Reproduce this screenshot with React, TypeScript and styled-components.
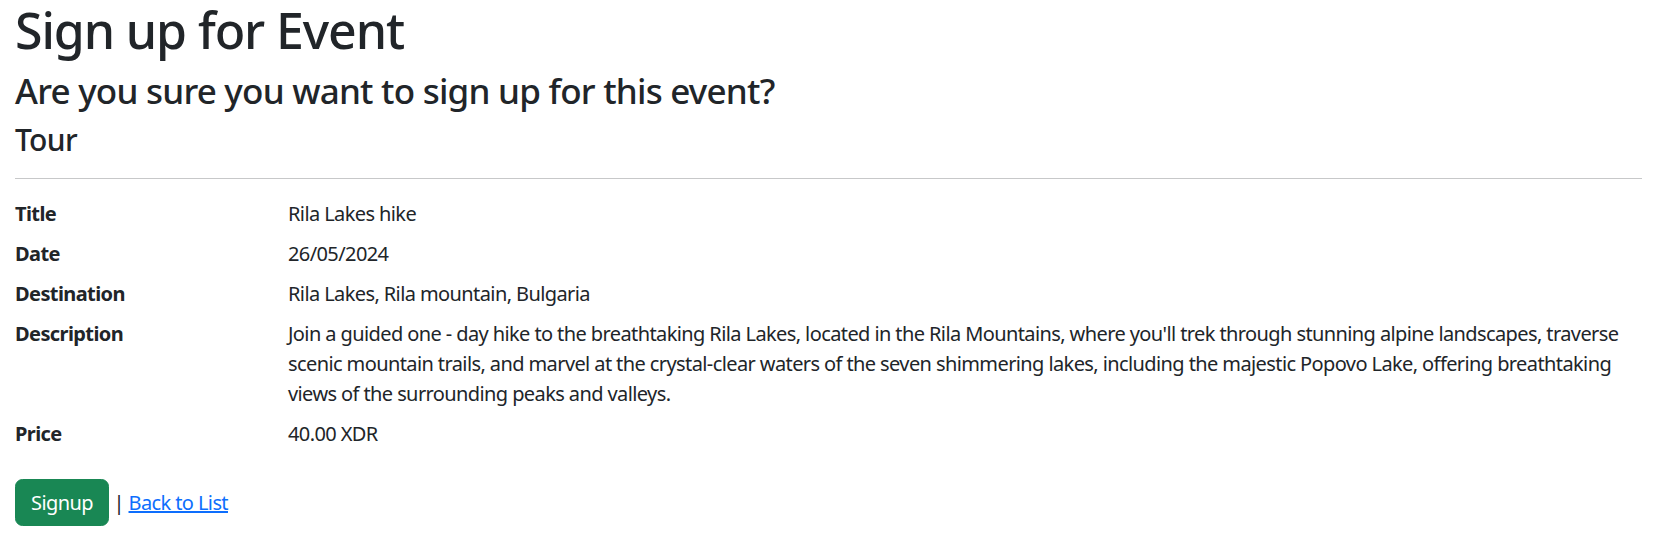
import styled, { createGlobalStyle } from 'styled-components';

const GlobalStyle = createGlobalStyle`
  body {
    margin: 0;
    background: #fff;
    color: #212529;
    font-family: 'Noto Sans', 'Open Sans', sans-serif;
    font-size: 20px;
    line-height: 1.5;
    letter-spacing: -0.6px;
  }
`;

const Page = styled.main`
  padding: 0 15px;
`;

const Heading = styled.h1<{ size: number }>`
  margin: 0 0 10px;
  font-size: ${({ size }) => size}px;
  font-weight: 500;
  line-height: 1.2;
  letter-spacing: -0.022em;
`;

const Divider = styled.hr`
  margin: 20px 0;
  border: 0;
  border-top: 1px solid rgba(33, 37, 41, 0.25);
`;

const Details = styled.dl`
  display: grid;
  grid-template-columns: 243px 1fr;
  column-gap: 30px;
  margin: 0 0 20px;
`;

const Term = styled.dt`
  font-weight: 700;
  margin: 0;
`;

const Value = styled.dd`
  margin: 0 0 10px;
`;

const Actions = styled.form`
  margin: 0;
`;

const SubmitButton = styled.button`
  display: inline-block;
  padding: 7.5px 15px;
  font: inherit;
  letter-spacing: inherit;
  line-height: 1.5;
  color: #fff;
  background: #198754;
  border: 1px solid #198754;
  border-radius: 7.5px;
  cursor: pointer;
`;

const Link = styled.a`
  color: #0d6efd;
  text-decoration: underline;
`;

const details: [string, string][] = [
  ['Title', 'Rila Lakes hike'],
  ['Date', '26/05/2024'],
  ['Destination', 'Rila Lakes, Rila mountain, Bulgaria'],
  [
    'Description',
    "Join a guided one - day hike to the breathtaking Rila Lakes, located in the Rila Mountains, where you'll trek through stunning alpine landscapes, traverse scenic mountain trails, and marvel at the crystal-clear waters of the seven shimmering lakes, including the majestic Popovo Lake, offering breathtaking views of the surrounding peaks and valleys.",
  ],
  ['Price', '40.00 XDR'],
];

export default function App() {
  return (
    <>
      <GlobalStyle />
      <Page>
        <Heading as="h1" size={50}>
          Sign up for Event
        </Heading>
        <Heading as="h3" size={35}>
          Are you sure you want to sign up for this event?
        </Heading>
        <Heading as="h4" size={30}>
          Tour
        </Heading>
        <Divider />
        <Details>
          {details.map(([label, value]) => (
            <>
              <Term key={label}>{label}</Term>
              <Value key={label + '-v'}>{value}</Value>
            </>
          ))}
        </Details>
        <Actions onSubmit={(e) => e.preventDefault()}>
          <SubmitButton type="submit">Signup</SubmitButton> |{' '}
          <Link href="#">Back to List</Link>
        </Actions>
      </Page>
    </>
  );
}
